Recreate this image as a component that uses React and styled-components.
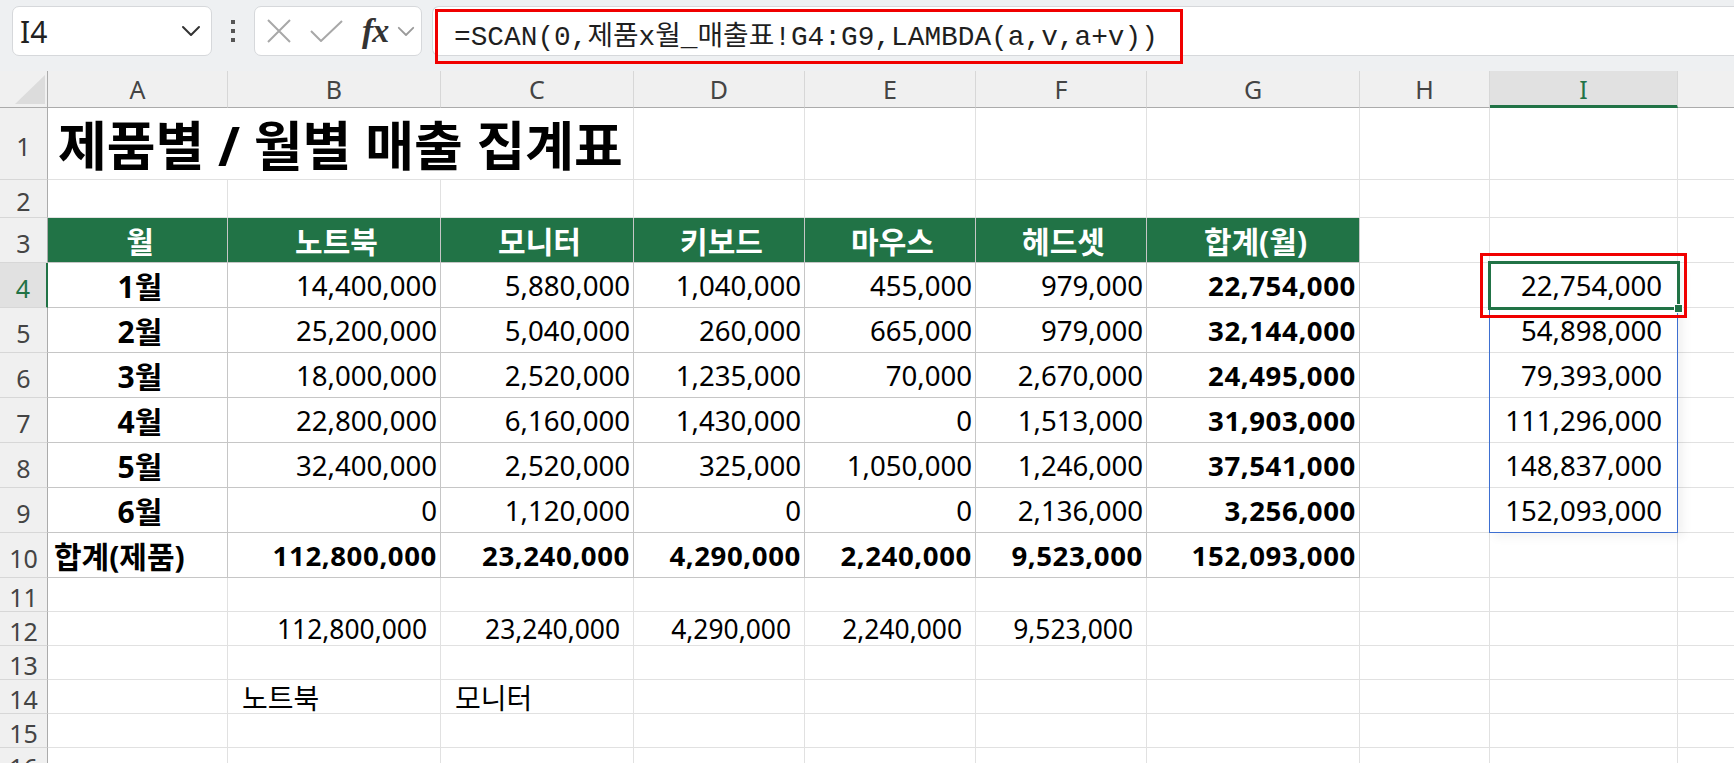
import React from 'react';
import styled, { createGlobalStyle } from 'styled-components';

const GREEN = '#217346';
const GRID = '#e1e1e1';
const TABLE_LINE = '#c6c6c6';

const GlobalStyle = createGlobalStyle`
  html, body {
    margin: 0;
    padding: 0;
    background: #ffffff;
    overflow: hidden;
  }
  body {
    font-family: 'Noto Sans', 'Noto Sans CJK KR', sans-serif;
  }
`;

const COLS = ['A', 'B', 'C', 'D', 'E', 'F', 'G', 'H', 'I', ''];
const COL_WIDTHS = [48, 180, 213, 193, 171, 171, 171, 213, 130, 188, 180];
const ROW_HEIGHTS = [72, 38, 45, 45, 45, 45, 45, 45, 45, 45, 34, 34, 34, 34, 34, 34];

const months = [
  ['1월', '14,400,000', '5,880,000', '1,040,000', '455,000', '979,000', '22,754,000', '22,754,000'],
  ['2월', '25,200,000', '5,040,000', '260,000', '665,000', '979,000', '32,144,000', '54,898,000'],
  ['3월', '18,000,000', '2,520,000', '1,235,000', '70,000', '2,670,000', '24,495,000', '79,393,000'],
  ['4월', '22,800,000', '6,160,000', '1,430,000', '0', '1,513,000', '31,903,000', '111,296,000'],
  ['5월', '32,400,000', '2,520,000', '325,000', '1,050,000', '1,246,000', '37,541,000', '148,837,000'],
  ['6월', '0', '1,120,000', '0', '0', '2,136,000', '3,256,000', '152,093,000'],
];
const heads = ['월', '노트북', '모니터', '키보드', '마우스', '헤드셋', '합계(월)'];
const totals = ['112,800,000', '23,240,000', '4,290,000', '2,240,000', '9,523,000', '152,093,000'];

const blank = (count) => Array.from({ length: count }, () => ({}));

// 시트 내용 (A..J), kind: title | head | label | text | small
const rows = [
  [{ v: '제품별 / 월별 매출 집계표', span: 3, kind: 'title', padL: 10 }, ...blank(7)],
  blank(10),
  [...heads.map((h) => ({ v: h, kind: 'head', align: 'center', bold: true })), ...blank(3)],
  ...months.map((m, i) => [
    { v: m[0], kind: 'label', align: 'center', bold: true, table: true },
    ...m.slice(1, 6).map((v) => ({ v, align: 'right', table: true })),
    { v: m[6], align: 'right', bold: true, table: true },
    {},
    { v: m[7], align: 'right', padR: 15, active: i === 0, spill: i === 0 },
    {},
  ]),
  [
    { v: '합계(제품)', kind: 'label', align: 'left', bold: true, table: true, padL: 6 },
    ...totals.map((v) => ({ v, align: 'right', bold: true, table: true })),
    ...blank(3),
  ],
  blank(10),
  [{}, ...totals.slice(0, 5).map((v) => ({ v, kind: 'small', align: 'right', padR: 13 })), ...blank(4)],
  blank(10),
  [
    {},
    { v: '노트북', kind: 'text', align: 'left', padL: 14 },
    { v: '모니터', kind: 'text', align: 'left', padL: 14 },
    ...blank(7),
  ],
  blank(10),
  blank(10),
];

const FONT_SIZE = { title: 53, head: 30, label: 30, text: 28, small: 26.4 };

const Page = styled.div`
  width: 100vw;
  height: 100vh;
  overflow: hidden;
  background: #ffffff;
`;

const Toolbar = styled.div`
  display: flex;
  align-items: flex-start;
  height: 71px;
  box-sizing: border-box;
  padding-top: 6px;
  background: #eef0f2;
`;

const NameBox = styled.div`
  margin-left: 12px;
  width: 200px;
  height: 50px;
  box-sizing: border-box;
  display: flex;
  align-items: center;
  justify-content: space-between;
  padding: 0 10px 0 7px;
  background: #ffffff;
  border: 1px solid #d6d8db;
  border-radius: 7px;
  font-size: 30px;
  color: #222;
`;

const Dots = styled.div`
  width: 42px;
  height: 50px;
  display: flex;
  flex-direction: column;
  align-items: center;
  justify-content: center;
  gap: 5px;

  span {
    width: 4px;
    height: 4px;
    background: #555;
  }
`;

const FxBox = styled.div`
  width: 168px;
  height: 50px;
  box-sizing: border-box;
  display: flex;
  align-items: center;
  padding: 0 4px 0 12px;
  gap: 19px;
  background: #ffffff;
  border: 1px solid #d6d8db;
  border-radius: 7px;
`;

const FxLabel = styled.span`
  font-family: 'Liberation Serif', 'DejaVu Serif', serif;
  font-style: italic;
  font-weight: 700;
  font-size: 34px;
  line-height: 1;
  color: #333;
  margin-right: -10px;
  letter-spacing: -1px;
`;

const FormulaBar = styled.div`
  position: relative;
  flex: 1;
  margin-left: 10px;
  height: 50px;
  box-sizing: border-box;
  display: flex;
  align-items: center;
  padding: 3px 0 0 21px;
  background: #ffffff;
  border: 1px solid #d6d8db;
  border-right: none;
  border-radius: 7px 0 0 7px;
  font-family: 'Liberation Mono', 'Noto Sans CJK KR', monospace;
  font-size: 27.8px;
  color: #1f1f1f;
  white-space: nowrap;
`;

const RedMark = styled.div`
  position: absolute;
  z-index: 3;
  left: ${(p) => p.$left}px;
  top: ${(p) => p.$top}px;
  width: ${(p) => p.$w}px;
  height: ${(p) => p.$h}px;
  box-sizing: border-box;
  border: 3px solid #f00000;
  pointer-events: none;
`;

const Sheet = styled.div`
  display: grid;
  grid-template-columns: ${COL_WIDTHS.map((w) => `${w}px`).join(' ')};
  grid-template-rows: 37px ${ROW_HEIGHTS.map((h) => `${h}px`).join(' ')};
`;

const Corner = styled.div`
  position: relative;
  background: #f0f0f0;
  border-right: 1px solid #ababab;
  border-bottom: 1px solid #ababab;

  &::after {
    content: '';
    position: absolute;
    left: 15px;
    top: 4px;
    width: 30px;
    height: 29px;
    background: #dcdcdc;
    clip-path: polygon(100% 0, 100% 100%, 0 100%);
  }
`;

const ColHead = styled.div`
  box-sizing: border-box;
  display: flex;
  align-items: center;
  justify-content: center;
  padding-top: ${(p) => (p.$active ? 2 : 0)}px;
  background: ${(p) => (p.$active ? '#e1e1e1' : '#f0f0f0')};
  color: ${(p) => (p.$active ? GREEN : '#444')};
  border-right: 1px solid #d7d7d7;
  border-bottom: ${(p) => (p.$active ? `3px solid ${GREEN}` : '1px solid #ababab')};
  font-size: 25px;
`;

const RowHead = styled.div`
  box-sizing: border-box;
  display: flex;
  align-items: center;
  justify-content: center;
  padding-top: 6px;
  background: ${(p) => (p.$active ? '#e1e1e1' : '#f0f0f0')};
  color: ${(p) => (p.$active ? GREEN : '#444')};
  border-right: ${(p) => (p.$active ? `2px solid ${GREEN}` : '1px solid #ababab')};
  border-bottom: 1px solid #d7d7d7;
  font-size: 25px;
  line-height: 25px;
`;

const Cell = styled.div`
  position: relative;
  box-sizing: border-box;
  min-width: 0;
  grid-column: span ${(p) => p.$span || 1};
  display: flex;
  align-items: center;
  justify-content: ${(p) =>
    p.$align === 'right' ? 'flex-end' : p.$align === 'center' ? 'center' : 'flex-start'};
  padding: 0 ${(p) => p.$padR ?? 3}px 0 ${(p) => p.$padL ?? 8}px;
  background: ${(p) => (p.$kind === 'head' ? GREEN : '#ffffff')};
  color: ${(p) => (p.$kind === 'head' ? '#ffffff' : '#000000')};
  border-right: 1px solid ${(p) => (p.$table || p.$kind === 'head' ? TABLE_LINE : GRID)};
  border-bottom: 1px solid ${(p) => (p.$table || p.$kind === 'head' ? TABLE_LINE : GRID)};
  font-size: ${(p) => FONT_SIZE[p.$kind] || 27.6}px;
  font-weight: ${(p) => (p.$bold || p.$kind === 'title' ? 700 : 400)};
  letter-spacing: ${(p) => (p.$bold && !p.$kind ? 0.6 : 0)}px;
  white-space: nowrap;
`;

const SpillRange = styled.div`
  position: absolute;
  z-index: 2;
  left: -1px;
  top: -1px;
  width: 189px;
  height: 271px;
  box-sizing: border-box;
  border: 1px solid #3d6fd1;
  box-shadow: 5px 4px 10px rgba(0, 0, 0, 0.06);
  pointer-events: none;
`;

const Selection = styled.div`
  position: absolute;
  z-index: 2;
  left: -2px;
  top: -2px;
  right: -3px;
  bottom: -3px;
  border: 3px solid ${GREEN};
  pointer-events: none;

  &::after {
    content: '';
    position: absolute;
    right: -6px;
    bottom: -6px;
    width: 7px;
    height: 7px;
    background: ${GREEN};
    border: 1px solid #ffffff;
  }
`;

const Chevron = ({ color, size = 20 }) => (
  <svg width={size} height={size * 0.6} viewBox="0 0 20 12" fill="none">
    <path d="M2 2 L10 10 L18 2" stroke={color} strokeWidth="2" strokeLinecap="round" strokeLinejoin="round" />
  </svg>
);

const CrossIcon = () => (
  <svg width="24" height="24" viewBox="0 0 24 24" fill="none">
    <path d="M1 1 L23 23 M23 1 L1 23" stroke="#a8a8a8" strokeWidth="2" />
  </svg>
);

const CheckIcon = () => (
  <svg width="33" height="22" viewBox="0 0 33 22" fill="none">
    <path d="M1 11 L11 21 L32 1" stroke="#a8a8a8" strokeWidth="2" />
  </svg>
);

const renderCell = (c, key) => (
  <Cell
    key={key}
    $span={c.span}
    $align={c.align}
    $bold={c.bold}
    $kind={c.kind}
    $table={c.table}
    $padL={c.padL}
    $padR={c.padR}
  >
    {c.v}
    {c.spill && <SpillRange />}
    {c.active && <Selection />}
    {c.active && <RedMark $left={-10} $top={-10} $w={207} $h={65} />}
  </Cell>
);

export default function App() {
  return (
    <Page>
      <GlobalStyle />
      <Toolbar>
        <NameBox>
          <span>I4</span>
          <Chevron color="#333" />
        </NameBox>
        <Dots>
          <span />
          <span />
          <span />
        </Dots>
        <FxBox>
          <CrossIcon />
          <CheckIcon />
          <FxLabel>fx</FxLabel>
          <Chevron color="#9a9a9a" size={18} />
        </FxBox>
        <FormulaBar>
          =SCAN(0,제품x월_매출표!G4:G9,LAMBDA(a,v,a+v))
          <RedMark $left={2} $top={2} $w={748} $h={55} />
        </FormulaBar>
      </Toolbar>
      <Sheet>
        <Corner />
        {COLS.map((c, i) => (
          <ColHead key={i} $active={c === 'I'}>
            {c}
          </ColHead>
        ))}
        {rows.map((cells, r) => (
          <React.Fragment key={r}>
            <RowHead $active={r === 3}>{r + 1}</RowHead>
            {cells.map((c, i) => renderCell(c, `${r}-${i}`))}
          </React.Fragment>
        ))}
      </Sheet>
    </Page>
  );
}
